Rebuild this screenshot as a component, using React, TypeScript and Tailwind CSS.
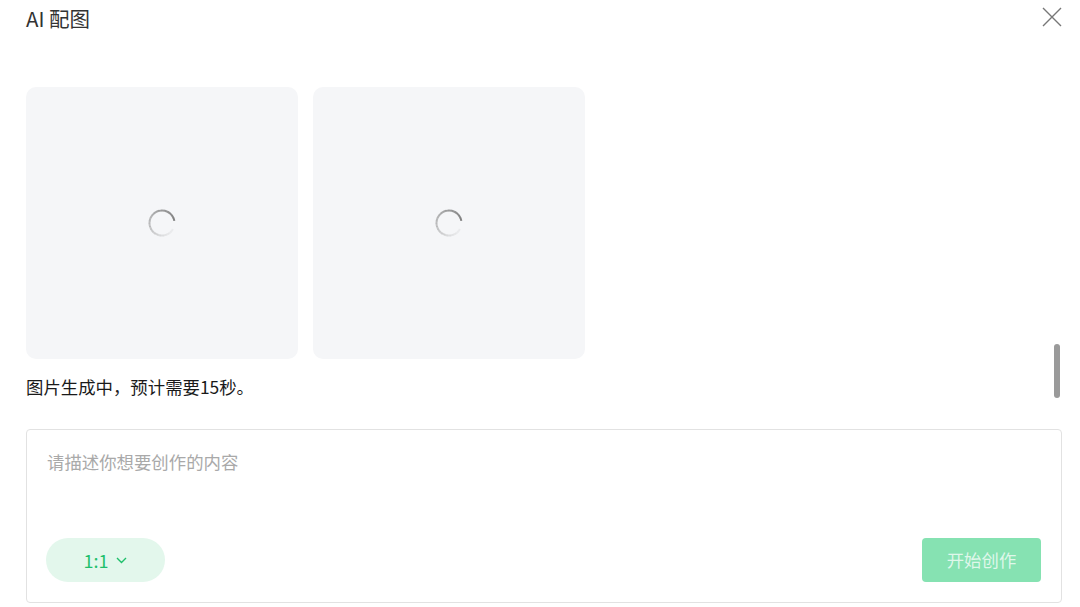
import React from "react";

const FONT = "font-['Noto_Sans_CJK_SC','Noto_Sans',sans-serif]";

function Spinner() {
  // faded arc: head near 3 o'clock, fading counter-clockwise
  const segs = 24;
  const r = 12.5;
  const c = 14;
  const start = -10;
  const span = 320;
  const items = Array.from({ length: segs }, (_, i) => {
    const a1 = ((start - (span / segs) * i) * Math.PI) / 180;
    const a2 = ((start - (span / segs) * (i + 1) - 0.8) * Math.PI) / 180;
    const x1 = c + r * Math.cos(a1);
    const y1 = c + r * Math.sin(a1);
    const x2 = c + r * Math.cos(a2);
    const y2 = c + r * Math.sin(a2);
    return (
      <path
        key={i}
        d={`M ${x1} ${y1} A ${r} ${r} 0 0 0 ${x2} ${y2}`}
        stroke="#6f6f6f"
        strokeOpacity={Math.max(0.08, 0.85 - (i / segs) * 0.85)}
        strokeWidth={2}
        fill="none"
      />
    );
  });
  return (
    <svg width="28" height="28" viewBox="0 0 28 28">
      {items}
    </svg>
  );
}

function ImageSlot() {
  return (
    <div className="w-[272px] h-[272px] rounded-[10px] bg-[#f5f6f8] flex items-center justify-center">
      <Spinner />
    </div>
  );
}

export default function App() {
  return (
    <div className={`relative w-[1080px] h-[607px] overflow-hidden bg-white ${FONT}`}>
      {/* header */}
      <div className="flex items-start justify-between pl-[26px] pr-[18px] pt-[4px]">
        <span className="text-[20.5px] leading-[28px] text-[#333]">AI 配图</span>
        <button className="mt-[3px] w-5 h-5 text-[#777]">
          <svg width="20" height="20" viewBox="0 0 20 20" fill="none">
            <path d="M1 1 L19 19 M19 1 L1 19" stroke="currentColor" strokeWidth="1.4" />
          </svg>
        </button>
      </div>

      <div className="pl-[26px] pr-[18px]">
        <div className="mt-[55px] flex gap-[15px]">
          <ImageSlot />
          <ImageSlot />
        </div>

        <p className="mt-[16px] text-[17.4px] leading-[24px] text-[#1a1a1a]">图片生成中，预计需要15秒。</p>

        <div className="mt-[30px] h-[174px] border border-[#e2e2e2] rounded-[4px] pl-[19px] pr-[20px] pt-[20px] pb-[20px] flex flex-col justify-between">
          <div className="pl-px text-[17.4px] leading-[24px] text-[#a9a9a9]">请描述你想要创作的内容</div>
          <div className="flex items-center justify-between">
            <button className="w-[119px] h-[44px] rounded-full bg-[#e3f7ec] text-[#1fbf6b] text-[18px] flex items-center justify-center gap-[8px]">
              <span>1:1</span>
              <svg width="11" height="7" viewBox="0 0 11 7" fill="none">
                <path d="M1 1 L5.5 5.5 L10 1" stroke="currentColor" strokeWidth="1.4" />
              </svg>
            </button>
            <button className="w-[119px] h-[44px] rounded-[4px] bg-[#86e2b2] text-[#dff7ea] text-[17.4px] flex items-center justify-center">
              开始创作
            </button>
          </div>
        </div>
      </div>

      {/* scrollbar thumb */}
      <div className="absolute left-[1054px] top-[344px] w-[6px] h-[54px] rounded-full bg-[#9a9a9a]" />
    </div>
  );
}
